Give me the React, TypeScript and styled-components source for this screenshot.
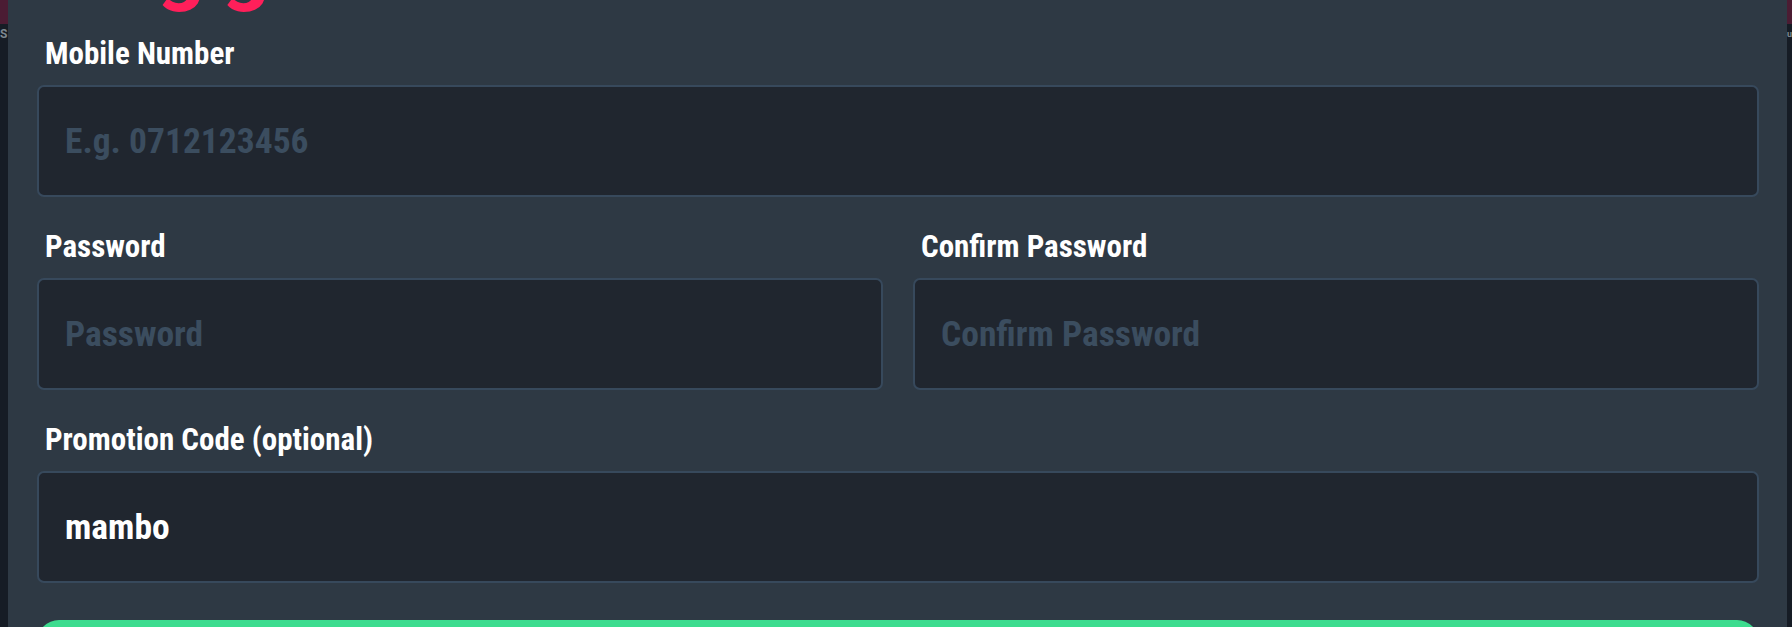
import styled, { createGlobalStyle } from "styled-components";

const GlobalStyle = createGlobalStyle`
  html, body {
    margin: 0;
    padding: 0;
    background-color: #151b23;
  }
  * {
    box-sizing: border-box;
  }
`;

const Backdrop = styled.div`
  display: flex;
  height: 627px;
  overflow: hidden;
  background: linear-gradient(to bottom, #4b1c33 0, #4b1c33 24px, #161c25 24px);
`;

const Edge = styled.div<{ $w: number; $size: number }>`
  width: ${(p) => p.$w}px;
  flex-shrink: 0;
  padding-top: 27px;
  color: #7d8790;
  font-family: Roboto, "Liberation Sans", sans-serif;
  font-size: ${(p) => p.$size}px;
  font-weight: 700;
  line-height: 14px;
  overflow: hidden;
`;

const Modal = styled.div`
  flex: 1;
  min-width: 0;
  background-color: #2e3944;
  padding: 0 28px 0 29px;
  display: flex;
  flex-direction: column;
  font-family: Roboto, "Liberation Sans", sans-serif;
  font-stretch: condensed;

  & > * {
    flex-shrink: 0;
  }
`;

const TitleClip = styled.div`
  height: 16px;
  overflow: hidden;
  margin-bottom: 20px;
`;

const Title = styled.h2`
  margin: -75px 0 0 120px;
  font-size: 84px;
  line-height: 84px;
  font-weight: 700;
  font-stretch: normal;
  color: #ff1f5a;
  word-spacing: -4px;
`;

const Form = styled.form`
  display: flex;
  flex-direction: column;
  gap: 32px;
`;

const Row = styled.div`
  display: grid;
  grid-template-columns: 1fr 1fr;
  gap: 30px;
`;

const Field = styled.div`
  display: flex;
  flex-direction: column;
  gap: 13px;
`;

const Label = styled.label`
  padding-left: 8px;
  font-size: 31px;
  line-height: 36px;
  font-weight: 700;
  color: #ffffff;
`;

const Input = styled.input`
  height: 112px;
  flex-shrink: 0;
  width: 100%;
  padding: 0 26px;
  background-color: #20262f;
  border: 2px solid #37495c;
  border-radius: 7px;
  outline: none;
  font-family: inherit;
  font-stretch: condensed;
  font-size: 35.5px;
  font-weight: 700;
  color: #ffffff;

  &::placeholder {
    color: #3b4d5f;
  }
`;

const Submit = styled.button`
  margin-top: 37px;
  height: 60px;
  border: none;
  border-radius: 22px;
  background-color: #3ddc8f;
`;

const App = () => {
  return (
    <>
      <GlobalStyle />
      <Backdrop>
        <Edge $w={8} $size={12}>S</Edge>
        <Modal>
          <TitleClip>
            <Title>g g</Title>
          </TitleClip>
          <Form onSubmit={(e) => e.preventDefault()}>
            <Field>
              <Label>Mobile Number</Label>
              <Input placeholder="E.g. 0712123456" />
            </Field>
            <Row>
              <Field>
                <Label>Password</Label>
                <Input type="password" placeholder="Password" />
              </Field>
              <Field>
                <Label>Confirm Password</Label>
                <Input type="password" placeholder="Confirm Password" />
              </Field>
            </Row>
            <Field>
              <Label>Promotion Code (optional)</Label>
              <Input defaultValue="mambo" />
            </Field>
          </Form>
          <Submit type="submit" />
        </Modal>
        <Edge $w={5} $size={9}>u</Edge>
      </Backdrop>
    </>
  );
};

export default App;
